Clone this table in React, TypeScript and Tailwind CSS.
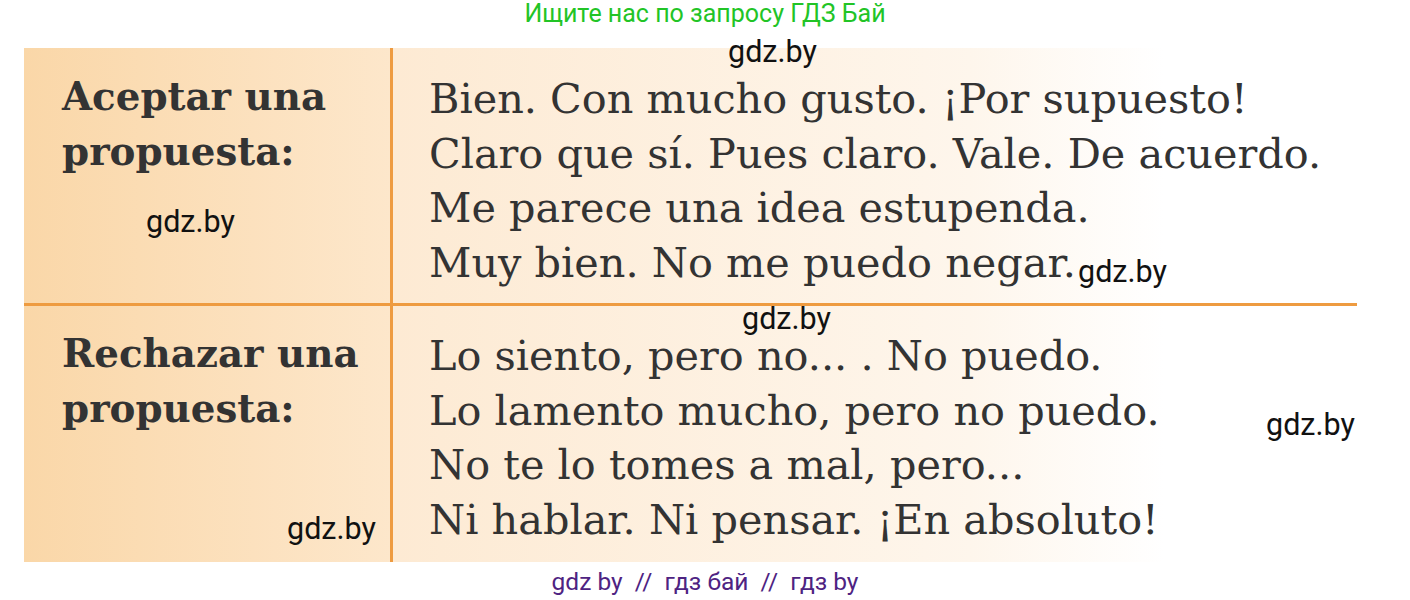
import React from "react";

const serif = { fontFamily: '"DejaVu Serif", "Liberation Serif", serif' };

function Mark({ className }: { className: string }) {
  return (
    <span
      className={`absolute text-[30.5px] leading-none text-[#111] whitespace-nowrap ${className}`}
      style={{ fontFamily: 'Roboto, "Liberation Sans", sans-serif' }}
    >
      gdz.by
    </span>
  );
}

export default function App() {
  return (
    <div className="relative w-[1410px] h-[600px] bg-white overflow-hidden">
      <div
        className="h-[48px] flex justify-center pt-[0px] text-[25px] leading-[28px] text-[#22c426]"
        style={{ fontFamily: 'Roboto, "Liberation Sans", sans-serif' }}
      >
        Ищите нас по запросу ГДЗ Бай
      </div>

      <div className="ml-[24px] w-[1333px] flex flex-col text-[#333]" style={serif}>
        <div className="flex h-[255px]">
          <div className="w-[369px] shrink-0 border-r-[3px] border-[#ee9b40] bg-gradient-to-r from-[#fad7a8] to-[#fde7cb] pl-[38px] pt-[21px] text-[38.8px] font-bold leading-[55px] whitespace-nowrap">
            <div>Aceptar una</div>
            <div>propuesta:</div>
          </div>
          <div className="flex-1 bg-gradient-to-r from-[#fdeAd3] via-[#fef6ec] via-60% to-white to-80% pl-[36px] pt-[24px] text-[41.4px] leading-[54.5px] whitespace-nowrap">
            <div>Bien. Con mucho gusto. ¡Por supuesto!</div>
            <div>Claro que sí. Pues claro. Vale. De acuerdo.</div>
            <div>Me parece una idea estupenda.</div>
            <div>Muy bien. No me puedo negar.</div>
          </div>
        </div>
        <div className="h-[3px] bg-[#ee9b40]" />
        <div className="flex h-[256px]">
          <div className="w-[369px] shrink-0 border-r-[3px] border-[#ee9b40] bg-gradient-to-r from-[#fad7a8] to-[#fde7cb] pl-[38px] pt-[20px] text-[38.8px] font-bold leading-[55px] whitespace-nowrap">
            <div>Rechazar una</div>
            <div>propuesta:</div>
          </div>
          <div className="flex-1 bg-gradient-to-r from-[#fdeAd3] via-[#fef6ec] via-60% to-white to-80% pl-[36px] pt-[23px] text-[41.4px] leading-[54.5px] whitespace-nowrap">
            <div>Lo siento, pero no... . No puedo.</div>
            <div>Lo lamento mucho, pero no puedo.</div>
            <div>No te lo tomes a mal, pero...</div>
            <div>Ni hablar. Ni pensar. ¡En absoluto!</div>
          </div>
        </div>
      </div>

      <div
        className="flex justify-center pt-[6px] text-[24.5px] leading-[28px] text-[#4e2382] whitespace-pre"
        style={{ fontFamily: 'Roboto, "Liberation Sans", sans-serif' }}
      >
        {"gdz by  //  гдз бай  //  гдз by"}
      </div>

      <Mark className="left-[728px] top-[37px]" />
      <Mark className="left-[146px] top-[207px]" />
      <Mark className="left-[1078px] top-[257px]" />
      <Mark className="left-[742px] top-[304px]" />
      <Mark className="left-[1266px] top-[410px]" />
      <Mark className="left-[287px] top-[514px]" />
    </div>
  );
}
